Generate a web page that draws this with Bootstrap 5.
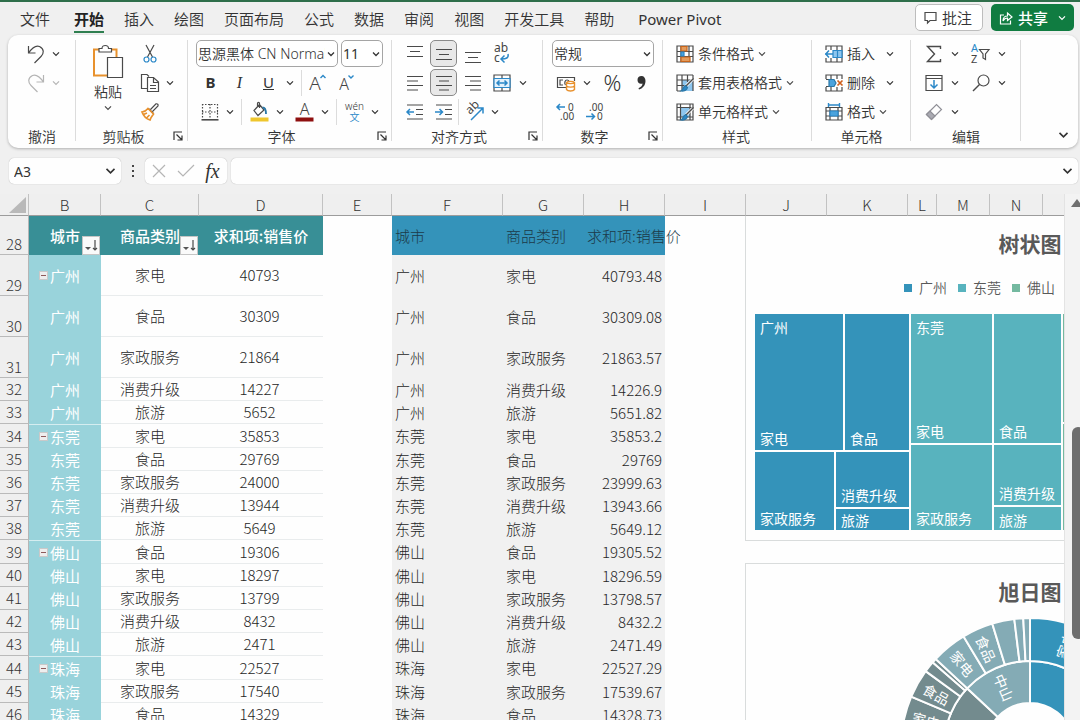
<!DOCTYPE html>
<html lang="zh-CN">
<head>
<meta charset="utf-8">
<meta name="viewport" content="width=device-width, initial-scale=1">
<title>Excel</title>
<link href="https://cdn.jsdelivr.net/npm/bootstrap@5.3.0/dist/css/bootstrap.min.css" rel="stylesheet">
<style>
  body { font-family: "Noto Sans", "Noto Sans CJK SC", sans-serif; font-size: 14px; font-weight: 350; color: #333; background: #f0f0f0; border-top: 2px solid #2f6f4b; }
  button, select, input { color: inherit; font-weight: inherit; }
  svg { display: block; flex: none; fill: none; stroke: #4a4a4a; stroke-width: 1.2; overflow: visible; }
  svg .ch { fill: #444; stroke: none; font-size: 10px; font-weight: 400; }
  svg .ch-a { font-size: 16px; text-anchor: middle; font-weight: 350; }
  svg .ch-l { font-size: 19px; text-anchor: middle; font-weight: 350; }
  .xbtn { display: flex; align-items: center; justify-content: center; padding: 0; border: 0; background: none; height: 27px; flex: none; white-space: nowrap; }
  .ic { width: 29px; }
  .ic-s { width: 27px; }
  .chev { width: 14px; }
  .chev svg { stroke: #333; }
  .txt { font-size: 15px; font-weight: 400; }
  .txt-i { font-family: "Liberation Serif", serif; font-size: 16px; font-style: italic; }
  .pressed { border: 1px solid #8a8a8a; border-radius: 5px; background: #e8e8e8; width: 27px; margin: 0 1px; }

  .menu-tabs { height: 33px; }
  .menu-tabs .nav { gap: 20px; padding-left: 20px; }
  .menu-tabs .nav-link { font-size: 15px; line-height: 24px; padding: 2px 0 2px; color: #333; }
  .menu-tabs .nav-link.active { font-weight: 700; color: #222; border-bottom: 2px solid #2f7f50; padding: 2px 0 0; }
  .top-bar { gap: 8px; padding: 0 6px 2px 0; }
  .top-btn { font-size: 15px; line-height: 24px; height: 27px; border-radius: 5px; padding: 0 8px; gap: 5px; display: flex; align-items: center; }
  .btn-note { background: #fff; border: 1px solid #bdbdbd; color: #333; width: 68px; }
  .btn-share { background: #107c41; border: 0; color: #fff; font-weight: 500; width: 83px; padding: 0 5px 0 8px; }
  .btn-share svg, .btn-share .chev svg { stroke: #fff; }

  .ribbon { background: #fefefe; border-radius: 10px; margin: 0 2px 0 8px; height: 113px; box-shadow: 0 1px 3px #0004; }
  .grp { position: relative; flex: none; padding-top: 4px; }
  .grp::after { content: ""; position: absolute; right: 0; top: 5px; bottom: 7px; width: 1px; background: #dcdcdc; }
  .line { display: flex; align-items: center; height: 29px; padding-left: 8px; }
  .g-undo .line { padding-left: 14px; }
  .cap { display: flex; align-items: center; height: 20px; padding-right: 3px; }
  .g-undo .cap, .g-edit .cap, .g-cell .cap { padding-right: 0; }
  .cap span { flex: 1; text-align: center; }
  .vsep { width: 1px; height: 26px; background: #dcdcdc; flex: none; }
  .g-undo { width: 68px; } .g-clip { width: 112px; } .g-font { width: 204px; } .g-align { width: 151px; }
  .g-num { width: 120px; } .g-style { width: 149px; } .g-cell { width: 99px; } .g-edit { width: 110px; }
  .box-select { appearance: none; border: 1px solid #a5a5a5; border-radius: 5px; height: 27px; padding: 0 12px 0 1px; font-size: 14px; color: #333; white-space: nowrap;
    background: #fff url("data:image/svg+xml,%3Csvg xmlns='http://www.w3.org/2000/svg' width='8' height='6' fill='none' stroke='%23333' stroke-width='1.3'%3E%3Cpath d='M1 1.5 4 4.5 7 1.5'/%3E%3C/svg%3E") no-repeat right 2px center; }
  .sel-font { width: 142px; } .sel-size { width: 42px; font-weight: 400; } .sel-num { width: 102px; margin-left: 1px; }
  .paste { flex-direction: column; justify-content: flex-start; height: 79px; width: 32px; margin-left: 16px; margin-right: 4px; }
  .py { font-size: 10px; line-height: 11px; }
  .menu-row { gap: 4px; padding-left: 13px; }

  .fbar { height: 26px; margin: 10px 2px 0 9px; }
  .fbox { background: #fefefe; border-radius: 5px; box-shadow: 0 0 1px #0005; display: flex; align-items: center; }
  .fbox input { border: 0; background: none; outline: 0; padding: 0 0 0 5px; min-width: 0; flex: 1; font-size: 14px; font-weight: 400; }
  .name-box { width: 112px; } .fx-box { width: 82px; }
  .dots { width: 24px; }
  .fx { font-family: "Liberation Serif", serif; font-style: italic; font-size: 20px; }

  .work { margin-top: 10px; min-height: 0; }
  .sheet { position: relative; overflow: hidden; background: #fefefe; min-width: 0; }
  .grid { table-layout: fixed; border-collapse: separate; border-spacing: 0; width: 1124px; font-family: "Noto Sans CJK SC", sans-serif; font-weight: 300; font-size: 15px; line-height: 20px; color: #262626; }
  .grid th, .grid td { padding: 0; height: 23px; white-space: nowrap; font-weight: 300; }
  .grid thead th { height: 22px; background: #efefef; border-right: 1px solid #c2c2c2; border-bottom: 1px solid #9c9c9c; text-align: center; color: #333; }
  .grid tbody th { background: #efefef; border-right: 1px solid #b5b5b5; border-bottom: 1px solid #bababa; text-align: center; color: #333; }
  .grid .hd > * { height: 39px; }
  .grid .tall > * { height: 41px; }
  .grid .hd > th, .grid .tall > th { vertical-align: bottom; }
  .grid .first > * { height: 24px; }
  .grid td:nth-child(2) { background: #99d3db; color: #fff; text-align: center; font-weight: 400; position: relative; }
  .grid td:nth-child(3), .grid td:nth-child(4) { text-align: center; border-bottom: 1px solid #e9eced; }
  .grid td:nth-child(4) { padding-right: 3px; }
  .grid td:nth-child(6), .grid td:nth-child(7), .grid td:nth-child(8) { background: #f1f1f1; padding-left: 3px; }
  .grid td:nth-child(8) { text-align: right; padding-right: 3px; }
  .grid .first td:nth-child(2) { border-top: 1px solid #d5edf0; }
  .grid .hd td:nth-child(-n+4) { background: #388f96; color: #fff; font-weight: 500; position: relative; border: 0; padding: 0; }
  .grid .hd td:nth-child(n+6):nth-child(-n+8) { background: #3493ba; text-align: left; color: #1c3a48; }
  .filter { position: absolute; right: 1px; bottom: 0; width: 18px; height: 19px; background: #fafafa; border: 1px solid #c5c5c5; padding: 0; }
  .fold { position: absolute; left: 10px; top: calc(50% - 5px); width: 9px; height: 9px; padding: 0; border: 1px solid #c9c9c9; background: #eee; display: flex; align-items: center; }
  .fold::after { content: ""; width: 5px; height: 1px; margin: auto; background: #8d5a5a; }
  .corner svg { margin-left: 9px; stroke: none; fill: #b9b9b9; }

  .charts { position: absolute; left: 745px; top: 22px; width: 570px; }
  .chart { background: #fefefe; border: 1px solid #d9dcdc; color: #595959; padding-top: 12px; }
  .chart h2 { font-family: "Noto Sans CJK SC", sans-serif; font-size: 21px; line-height: 30px; font-weight: 700; margin: 0; text-align: center; color: #595959; }
  .chart-tree { height: 325px; border-top: 0; }
  .chart-sun { height: 340px; margin-top: 22px; }
  .legend-row { gap: 11px; padding-left: 158px; line-height: 20px; margin-top: 20px; }
  .legend-row i { width: 8px; height: 8px; margin-right: 7px; }
  .c1 { background: #3493ba; } .c2 { background: #58b3be; } .c3 { background: #74b9a0; }
  .tree { margin: 16px 9px 0; height: 216px; gap: 2px; color: #fff; font-family: "Noto Sans CJK SC", sans-serif; line-height: 20px; font-weight: 400; }
  .tree .d-flex { gap: 2px; }
  .cell { display: flex; flex-direction: column; justify-content: space-between; padding: 3px 5px 2px; }
  .cell span:only-child { margin-top: auto; }
  .cell.low { padding: 0 5px; }
  .w-a { width: 154px; } .w-b { width: 150px; }
  .chart-sun text { fill: #fff; stroke: none; font: 14px "Noto Sans CJK SC", sans-serif; text-anchor: middle; dominant-baseline: central; }
  .sun { stroke: #fefefe; stroke-width: 2; }
  #sunburst { margin-top: 11px; }

  .vscroll { width: 16px; background: #f3f3f3; border-left: 1px solid #e3e3e3; overflow: hidden; }
  .vscroll svg { margin: 5px 0 0 6px; stroke: none; fill: #707070; }
  .thumb { width: 12px; height: 212px; margin: 220px 0 0 7px; border-radius: 6px; background: #6e6e6e; }
</style>
</head>
<body class="vh-100 d-flex flex-column overflow-hidden">
<svg class="d-none">
  <symbol id="cv" viewBox="0 0 8 6"><path d="M1 1.4 4 4.4 7 1.4"/></symbol>
  <symbol id="launch" viewBox="0 0 10 10"><path d="M1 9V1H9M3.5 3.5 8.5 8.5M9 4.5V9H4.5"/></symbol>
</svg>

<header class="menu-tabs d-flex flex-shrink-0 align-items-center justify-content-between">
  <ul class="nav flex-nowrap text-nowrap">
    <li class="me-1"><a class="nav-link" href="#">文件</a></li>
    <li><a class="nav-link active" href="#">开始</a></li>
    <li><a class="nav-link" href="#">插入</a></li>
    <li><a class="nav-link" href="#">绘图</a></li>
    <li><a class="nav-link" href="#">页面布局</a></li>
    <li><a class="nav-link" href="#">公式</a></li>
    <li><a class="nav-link" href="#">数据</a></li>
    <li><a class="nav-link" href="#">审阅</a></li>
    <li><a class="nav-link" href="#">视图</a></li>
    <li><a class="nav-link" href="#">开发工具</a></li>
    <li class="me-1"><a class="nav-link" href="#">帮助</a></li>
    <li><a class="nav-link fw-normal" href="#">Power Pivot</a></li>
  </ul>
  <div class="top-bar d-flex text-nowrap">
    <button class="top-btn btn-note"><svg width="13" height="13"><path d="M1 1.5H12V9.5H6L3.5 12V9.5H1Z"/></svg>批注</button>
    <button class="top-btn btn-share"><svg width="14" height="14"><path d="M5 4H1.5V13H11.5V9.5M4 10C4 6.500 6 5 8.500 5V2L13 6 8.500 9.500V7C6.500 7 5 8 4 10Z"/></svg>共享<span class="chev ms-auto"><svg class="m-auto" width="8" height="6"><use href="#cv"/></svg></span></button>
  </div>
</header>

<section class="ribbon d-flex flex-shrink-0" aria-label="开始">
  <div class="grp g-undo">
    <div class="line">
      <button class="xbtn ic-s" aria-label="撤消"><svg width="18" height="20"><path d="M1.500 2V9H8.500M1.500 9C5 4 9 1 12.500 2.500 17.500 5 17 9.500 14 12.500L7.500 19"/></svg></button>
      <button class="xbtn chev" aria-label="撤消选项"><svg width="8" height="6"><use href="#cv"/></svg></button>
    </div>
    <div class="line">
      <button class="xbtn ic-s" aria-label="恢复"><svg width="18" height="20" style="stroke:#b5b5b5"><path d="M16.500 2V9H9.500M16.500 9C13 4 9 1 5.500 2.500 .5 5 1 9.500 4 12.500L10.500 19"/></svg></button>
      <button class="xbtn chev" aria-label="恢复选项"><svg width="8" height="6" style="stroke:#b5b5b5"><use href="#cv"/></svg></button>
    </div>
    <div class="line"></div>
    <div class="cap"><span>撤消</span></div>
  </div>

  <div class="grp g-clip">
    <div class="d-flex">
      <div style="height:87px">
        <button class="xbtn paste mt-1"><svg width="32" height="36"><path stroke="#e8912d" stroke-width="2" d="M7 6.500H2V32.500H15M19 6.500H24.500V14"/><path fill="#fff" d="M7 9V5.500H10C10 1.500 16.500 1.500 16.500 5.500H19.500V9ZM15.500 14.500H30.500V34.500H15.500Z"/></svg><span class="lh-sm mt-1">粘贴</span><svg class="mt-1" width="8" height="6"><use href="#cv"/></svg></button>
      </div>
      <div>
        <div class="line"><button class="xbtn ic-s" aria-label="剪切"><svg width="14" height="20"><path d="M3 1 9.500 13M11 1 4.500 13"/><circle cx="3.500" cy="15.500" r="2.500" stroke="#2b88c8"/><circle cx="10.500" cy="15.500" r="2.500" stroke="#2b88c8"/></svg></button></div>
        <div class="line"><button class="xbtn ic-s" aria-label="复制"><svg width="20" height="20"><path d="M7 15.500H1.500V1.500H7L9 3.500M7.500 4.500H13.500L18.500 9V18.500H7.500ZM13.500 4.500V9.500H18.500M10 12.500H16M10 15.500H16"/></svg></button><button class="xbtn chev" aria-label="复制选项"><svg width="8" height="6"><use href="#cv"/></svg></button></div>
        <div class="line"><button class="xbtn ic-s" aria-label="格式刷"><svg width="18" height="18"><path d="M7.500 5.500 12.500 10.500M9.500 6.500 15 .8C16.500 .5 17.500 1.500 17 3L11.500 8.500"/><path stroke="#e8912d" stroke-width="1.700" d="M7 5.500C5 8 3 8.800 1 9 2.500 13 5.500 16 9 17 9.500 15 11 13 12.500 11ZM2.500 11.500 6 10M5.500 15 8.500 12"/></svg></button></div>
      </div>
    </div>
    <div class="cap"><span>剪贴板</span><button class="xbtn chev" aria-label="剪贴板设置"><svg width="10" height="10"><use href="#launch"/></svg></button></div>
  </div>

  <div class="grp g-font">
    <div class="line" style="gap:3px">
      <select class="box-select sel-font" aria-label="字体"><option>思源黑体 CN Normal</option></select>
      <select class="box-select sel-size" aria-label="字号"><option>11</option></select>
    </div>
    <div class="line">
      <button class="xbtn ic txt fw-bold">B</button><button class="xbtn ic txt-i">I</button><button class="xbtn ic txt text-decoration-underline">U</button>
      <button class="xbtn chev" aria-label="下划线选项"><svg width="8" height="6"><use href="#cv"/></svg></button>
      <span class="vsep ms-1"></span>
      <button class="xbtn ic" aria-label="增大字号"><svg width="18" height="20"><text class="ch ch-l" x="7" y="17">A</text><path stroke="#2b88c8" stroke-width="1.400" d="M12.500 5 15 2.500 17.500 5"/></svg></button>
      <button class="xbtn ic" aria-label="减小字号"><svg width="18" height="20"><text class="ch ch-a" x="7" y="17">A</text><path stroke="#2b88c8" stroke-width="1.400" d="M11.500 2.500 14 5 16.500 2.500"/></svg></button>
    </div>
    <div class="line">
      <button class="xbtn ic-s" aria-label="边框"><svg width="18" height="18"><path stroke-dasharray="1.500 1.500" d="M1.500 1V16M9 1V16M16.500 1V16M1 1.500H17M1 9H17"/><path stroke-width="1.600" d="M.5 16.800H17.500"/></svg></button>
      <button class="xbtn chev" aria-label="边框选项"><svg width="8" height="6"><use href="#cv"/></svg></button>
      <span class="vsep mx-1"></span>
      <button class="xbtn ic-s" aria-label="填充颜色"><svg width="19" height="20"><path d="M4 8.500 9.500 2.500 14 8 8 13.500ZM9.500 6V1.500C9.500 0 7.500 0 7.500 1.500V4"/><path stroke="#2b78a8" stroke-width="1.800" d="M12.500 5.500C15.500 5.500 16 8.500 16 12"/><path stroke="#efc62d" stroke-width="4" d="M.5 17.500H18.500"/></svg></button>
      <button class="xbtn chev" aria-label="填充选项"><svg width="8" height="6"><use href="#cv"/></svg></button>
      <button class="xbtn ic-s ms-1" aria-label="字体颜色"><svg width="19" height="20"><text class="ch ch-a" x="9.500" y="13">A</text><path stroke="#8e0f0f" stroke-width="4" d="M.5 17.500H18.500"/></svg></button>
      <button class="xbtn chev" aria-label="字体颜色选项"><svg width="8" height="6"><use href="#cv"/></svg></button>
      <span class="vsep mx-1"></span>
      <button class="xbtn ic-s flex-column py"><span>wén</span><span style="color:#2b88c8">文</span></button>
      <button class="xbtn chev" aria-label="拼音选项"><svg width="8" height="6"><use href="#cv"/></svg></button>
    </div>
    <div class="cap"><span>字体</span><button class="xbtn chev" aria-label="字体设置"><svg width="10" height="10"><use href="#launch"/></svg></button></div>
  </div>

  <div class="grp g-align">
    <div class="line">
      <button class="xbtn ic" aria-label="顶端对齐"><svg width="18" height="18"><path d="M1 1.500H17M4 6.500H14M1 11.500H17"/></svg></button>
      <button class="xbtn pressed" aria-label="垂直居中"><svg width="18" height="18"><path d="M1 4.500H17M4 9.500H14M1 14.500H17"/></svg></button>
      <button class="xbtn ic" aria-label="底端对齐"><svg width="18" height="18"><path d="M1 7.500H17M4 12.500H14M1 17.500H17"/></svg></button>
      <button class="xbtn ic" aria-label="自动换行"><svg width="17" height="20"><text class="ch" x="1" y="8" style="font-size:12px">ab</text><text class="ch" x="1" y="18" style="font-size:12px">c</text><path stroke="#2b88c8" stroke-width="1.500" d="M15 10C16 14 13 15 8.500 15M11.500 11.500 8 15 11.500 18.500"/></svg></button>
    </div>
    <div class="line">
      <button class="xbtn ic" aria-label="左对齐"><svg width="18" height="18"><path d="M1 2.500H17M1 7H12M1 11.500H17M1 16H12"/></svg></button>
      <button class="xbtn pressed" aria-label="居中"><svg width="18" height="18"><path d="M1 2.500H17M4 7H14M1 11.500H17M4 16H14"/></svg></button>
      <button class="xbtn ic" aria-label="右对齐"><svg width="18" height="18"><path d="M1 2.500H17M6 7H17M1 11.500H17M6 16H17"/></svg></button>
      <button class="xbtn ic" aria-label="合并后居中"><svg width="18" height="18"><path d="M1 1H17V17H1ZM9 1V5M9 13V17"/><path fill="#e4f1fb" stroke="#2b88c8" d="M1 4.500H17V13.500H1Z"/><path stroke="#2b88c8" stroke-width="1.500" d="M4 9H14M6.500 6.500 4 9 6.500 11.500M11.500 6.500 14 9 11.500 11.500"/></svg></button>
      <button class="xbtn chev" aria-label="合并选项"><svg width="8" height="6"><use href="#cv"/></svg></button>
    </div>
    <div class="line">
      <button class="xbtn ic" aria-label="减少缩进"><svg width="18" height="18"><path d="M1 2H17M10 6.500H17M10 11.500H17M1 16H17"/><path stroke="#2b88c8" stroke-width="1.500" d="M1 9H8M4 6 1 9 4 12"/></svg></button>
      <button class="xbtn ic" aria-label="增加缩进"><svg width="18" height="18"><path d="M1 2H17M10 6.500H17M10 11.500H17M1 16H17"/><path stroke="#2b88c8" stroke-width="1.500" d="M0 9H7M4.500 6 7.500 9 4.500 12"/></svg></button>
      <span class="vsep"></span>
      <button class="xbtn ic" aria-label="方向"><svg width="20" height="20"><text class="ch" transform="translate(6 13) rotate(-45)" style="font-size:12px">ab</text><path stroke="#2b88c8" stroke-width="1.500" d="M7 18 18.500 6.500M13.500 6H19V11.500"/></svg></button>
      <button class="xbtn chev" aria-label="方向选项"><svg width="8" height="6"><use href="#cv"/></svg></button>
    </div>
    <div class="cap"><span>对齐方式</span><button class="xbtn chev" aria-label="对齐设置"><svg width="10" height="10"><use href="#launch"/></svg></button></div>
  </div>

  <div class="grp g-num">
    <div class="line"><select class="box-select sel-num" aria-label="数字格式"><option>常规</option></select></div>
    <div class="line">
      <button class="xbtn ic" aria-label="会计数字格式"><svg width="20" height="18"><path d="M10 13.500H1.500V3.500H18.500V7M7 6H4V11H7M9.500 11C8 9 9 6 11 6S13 7 13 8"/><path fill="#fff" stroke="#e8912d" stroke-width="1.400" d="M10.500 8.500C12 7 17 7 18.500 8.500V15.500C17 17.500 12 17.500 10.500 15.500ZM10.500 8.500C12 10 17 10 18.500 8.500M10.500 12C12 13.500 17 13.500 18.500 12"/></svg></button>
      <button class="xbtn chev" aria-label="会计格式选项"><svg width="8" height="6"><use href="#cv"/></svg></button>
      <button class="xbtn ic ms-1" style="font-size:22px">%</button>
      <button class="xbtn ic" aria-label="千位分隔样式"><svg width="10" height="16"><path fill="#333" stroke="none" d="M4.500 1C7 1 8.500 3 8.500 6 8.500 10.500 5.500 13.500 2 14.500L1.500 13.300C4 12 5.500 10.500 5.500 8.500 2.500 9.500 .5 7.500 .5 5 .5 2.500 2 1 4.500 1Z"/></svg></button>
    </div>
    <div class="line">
      <button class="xbtn ic" aria-label="增加小数位数"><svg width="19" height="20"><text class="ch" x="12" y="9">0</text><text class="ch" x="4" y="18">.00</text><path stroke="#2b88c8" stroke-width="1.500" d="M1 5H9M4 2 1 5 4 8"/></svg></button>
      <button class="xbtn ic" aria-label="减少小数位数"><svg width="19" height="20"><text class="ch" x="4" y="9">.00</text><text class="ch" x="12" y="18">0</text><path stroke="#2b88c8" stroke-width="1.500" d="M1 14.500H9.500M6.500 11.500 9.500 14.500 6.500 17.500"/></svg></button>
    </div>
    <div class="cap"><span>数字</span><button class="xbtn chev" aria-label="数字设置"><svg width="10" height="10"><use href="#launch"/></svg></button></div>
  </div>

  <div class="grp g-style">
    <div class="line menu-row"><button class="xbtn gap-1"><svg width="18" height="18"><path d="M1 1H17V17H1ZM1 6.500H17M1 11.500H17M5 1V17M13 1V17"/><path fill="#e39a5a" stroke="#c8651b" d="M5 1.500H11V6H5ZM5 12H14V16.500H5Z"/><path fill="#4ba3dd" stroke="#2b88c8" d="M5 7H8V11H5Z"/></svg>条件格式<svg width="8" height="6"><use href="#cv"/></svg></button></div>
    <div class="line menu-row"><button class="xbtn gap-1"><svg width="18" height="18"><path fill="#8ec6ee" stroke="none" d="M6 6H17V17H6Z"/><path d="M1 17V1H17M1 6H17M1 11.500H10M6 1V17M11.500 1V8M1 17H5M17 1V17"/><path stroke="#fff" stroke-width="3" d="M17 5 9 13"/><path stroke-width="1.500" d="M17.500 4.500 10 12"/><path fill="#2b88c8" stroke="#2b78a8" d="M9.500 11.500 11.500 13.500C11 16 8 17.500 5 17 7 16 7 13 9.500 11.500Z"/></svg>套用表格格式<svg width="8" height="6"><use href="#cv"/></svg></button></div>
    <div class="line menu-row"><button class="xbtn gap-1"><svg width="18" height="18"><path fill="#8ec6ee" stroke="none" d="M4 4H14V14H4Z"/><path d="M1 1H17V17H1ZM1 4.500H17M4.500 1V17M1 14H17M14 1V17"/><path stroke="#fff" stroke-width="3" d="M17 5 9 13"/><path stroke-width="1.500" d="M17.500 4.500 10 12"/><path fill="#2b88c8" stroke="#2b78a8" d="M9.500 11.500 11.500 13.500C11 16 8 17.500 5 17 7 16 7 13 9.500 11.500Z"/></svg>单元格样式<svg width="8" height="6"><use href="#cv"/></svg></button></div>
    <div class="cap"><span>样式</span></div>
  </div>

  <div class="grp g-cell">
    <div class="line menu-row"><button class="xbtn gap-1"><svg width="18" height="18"><path d="M1 5V1H17V17H1V13M6 1V5M12 1V5M6 13V17M12 13V17"/><path fill="#8ec6ee" stroke="#2b88c8" d="M8 5.500H17V12.500H8ZM12.500 5.500V12.500"/><path stroke="#2b88c8" stroke-width="1.500" d="M0 9H8M4 5.500 .8 9 4 12.500"/></svg>插入</button><button class="xbtn chev ms-1" aria-label="插入选项"><svg width="8" height="6"><use href="#cv"/></svg></button></div>
    <div class="line menu-row"><button class="xbtn gap-1"><svg width="18" height="18"><path d="M1 5V1H17V5M1 13V17H17V13M6 1V5M12 1V5M6 13V17M12 13V17M1 5.500H4M1 12.500H4"/><path fill="#4ba3dd" stroke="#2b78a8" d="M4 5.500H9L11 9 9 12.500H4Z"/><path stroke="#d0601c" stroke-width="1.700" d="M12.500 6.500 17.500 11.500M17.500 6.500 12.500 11.500"/></svg>删除</button><button class="xbtn chev ms-1" aria-label="删除选项"><svg width="8" height="6"><use href="#cv"/></svg></button></div>
    <div class="line menu-row"><button class="xbtn gap-1"><svg width="18" height="18"><path d="M1 4.500H17V17H1ZM1 8H17M1 13H17M5 4.500V17M13 4.500V17"/><path fill="#4ba3dd" stroke="#2b88c8" d="M5 8H13V13H5Z"/><path stroke="#2b88c8" stroke-width="1.400" d="M3.500 0V4M14.500 0V4M3.500 2H14.500"/></svg>格式<svg width="8" height="6"><use href="#cv"/></svg></button></div>
    <div class="cap"><span>单元格</span></div>
  </div>

  <div class="grp g-edit">
    <div class="line">
      <button class="xbtn ic" aria-label="自动求和"><svg width="16" height="18"><path stroke-width="1.400" d="M14.500 4V1.500H1.500L8.500 9 1.500 16.500H14.500V14"/></svg></button>
      <button class="xbtn chev" aria-label="求和选项"><svg width="8" height="6"><use href="#cv"/></svg></button>
      <button class="xbtn ic ms-1" aria-label="排序和筛选"><svg width="19" height="20"><text class="ch" x="0" y="8" style="fill:#2b88c8;font-size:11px">A</text><text class="ch" x="0" y="19" style="font-size:11px">Z</text><path d="M8.500 5.500H18L14.500 10V15.500L12 14V10Z"/></svg></button>
      <button class="xbtn chev" aria-label="排序选项"><svg width="8" height="6"><use href="#cv"/></svg></button>
    </div>
    <div class="line">
      <button class="xbtn ic" aria-label="填充"><svg width="18" height="18"><path d="M1 1.500H17V16.500H1ZM1 4.500H17"/><path stroke="#2b88c8" stroke-width="1.500" d="M9 6V14M5.500 10.500 9 14 12.500 10.500"/></svg></button>
      <button class="xbtn chev" aria-label="填充选项"><svg width="8" height="6"><use href="#cv"/></svg></button>
      <button class="xbtn ic ms-1" aria-label="查找和选择"><svg width="18" height="18"><circle cx="11.500" cy="6.500" r="5.500"/><path stroke-width="1.400" d="M7.500 10.500 1 17"/></svg></button>
      <button class="xbtn chev" aria-label="查找选项"><svg width="8" height="6"><use href="#cv"/></svg></button>
    </div>
    <div class="line">
      <button class="xbtn ic" aria-label="清除"><svg width="18" height="18" style="stroke:#8f8f96"><path d="M1.500 11.500 11.500 1.500 16.500 6.500 6.500 16.500Z"/><path fill="#aaaab2" d="M1.500 11.500 5 8 10 13 6.500 16.500Z"/></svg></button>
      <button class="xbtn chev" aria-label="清除选项"><svg width="8" height="6"><use href="#cv"/></svg></button>
    </div>
    <div class="cap"><span>编辑</span></div>
  </div>
  <button class="xbtn chev ms-auto mt-auto me-2" aria-label="功能区显示选项"><svg width="11" height="8" viewBox="0 0 8 6"><use href="#cv"/></svg></button>
</section>

<section class="fbar d-flex flex-shrink-0">
  <div class="fbox name-box"><input aria-label="名称框" value="A3"><button class="xbtn chev me-1" aria-label="名称列表"><svg width="11" height="8" viewBox="0 0 8 6"><use href="#cv"/></svg></button></div>
  <div class="dots d-flex align-items-center justify-content-center"><svg width="8" height="14" style="fill:#444;stroke:none"><path d="M3 1h2v2H3zM3 6h2v2H3zM3 11h2v2H3z"/></svg></div>
  <div class="fbox fx-box">
    <button class="xbtn ic-s" aria-label="取消"><svg width="14" height="14" style="stroke:#b5b5b5"><path d="M1 1 13 13M13 1 1 13"/></svg></button>
    <button class="xbtn ic-s" aria-label="输入"><svg width="18" height="14" style="stroke:#b5b5b5"><path d="M1 7 6 12 17 1"/></svg></button>
    <button class="xbtn ic-s fx" aria-label="插入函数">fx</button>
  </div>
  <div class="fbox flex-fill ms-1"><input aria-label="编辑栏"><button class="xbtn chev me-1" aria-label="展开编辑栏"><svg width="11" height="8" viewBox="0 0 8 6"><use href="#cv"/></svg></button></div>
</section>

<main class="work d-flex flex-fill">
  <div class="sheet flex-fill">
    <table class="grid">
      <colgroup><col style="width:29px"><col style="width:72px"><col style="width:98px"><col style="width:124px"><col style="width:69px"><col style="width:111px"><col style="width:81px"><col style="width:81px"><col style="width:81px"><col style="width:81px"><col style="width:81px"><col style="width:29px"><col style="width:53px"><col style="width:53px"><col style="width:81px"></colgroup>
      <thead><tr><th class="corner"><svg width="18" height="16"><path d="M17 0V16H0Z"/></svg></th><th>B</th><th>C</th><th>D</th><th>E</th><th>F</th><th>G</th><th>H</th><th>I</th><th>J</th><th>K</th><th>L</th><th>M</th><th>N</th><th></th></tr></thead>
      <tbody>
        <tr class="hd"><th>28</th><td>城市<button class="filter" aria-label="筛选城市"><svg width="16" height="17"><path fill="#555" stroke="none" d="M2 10H8L5 13Z"/><path d="M12 3V13M10 11 12 13 14 11"/></svg></button></td><td>商品类别<button class="filter" aria-label="筛选商品类别"><svg width="16" height="17"><path fill="#555" stroke="none" d="M2 10H8L5 13Z"/><path d="M12 3V13M10 11 12 13 14 11"/></svg></button></td><td>求和项:销售价</td><td></td><td>城市</td><td>商品类别</td><td>求和项:销售价</td></tr>
        <tr class="tall"><th>29</th><td><button class="fold" aria-label="折叠广州"></button>广州</td><td>家电</td><td>40793</td><td></td><td>广州</td><td>家电</td><td>40793.48</td></tr>
        <tr class="tall"><th>30</th><td>广州</td><td>食品</td><td>30309</td><td></td><td>广州</td><td>食品</td><td>30309.08</td></tr>
        <tr class="tall"><th>31</th><td>广州</td><td>家政服务</td><td>21864</td><td></td><td>广州</td><td>家政服务</td><td>21863.57</td></tr>
        <tr><th>32</th><td>广州</td><td>消费升级</td><td>14227</td><td></td><td>广州</td><td>消费升级</td><td>14226.9</td></tr>
        <tr><th>33</th><td>广州</td><td>旅游</td><td>5652</td><td></td><td>广州</td><td>旅游</td><td>5651.82</td></tr>
        <tr class="first"><th>34</th><td><button class="fold" aria-label="折叠东莞"></button>东莞</td><td>家电</td><td>35853</td><td></td><td>东莞</td><td>家电</td><td>35853.2</td></tr>
        <tr><th>35</th><td>东莞</td><td>食品</td><td>29769</td><td></td><td>东莞</td><td>食品</td><td>29769</td></tr>
        <tr><th>36</th><td>东莞</td><td>家政服务</td><td>24000</td><td></td><td>东莞</td><td>家政服务</td><td>23999.63</td></tr>
        <tr><th>37</th><td>东莞</td><td>消费升级</td><td>13944</td><td></td><td>东莞</td><td>消费升级</td><td>13943.66</td></tr>
        <tr><th>38</th><td>东莞</td><td>旅游</td><td>5649</td><td></td><td>东莞</td><td>旅游</td><td>5649.12</td></tr>
        <tr class="first"><th>39</th><td><button class="fold" aria-label="折叠佛山"></button>佛山</td><td>食品</td><td>19306</td><td></td><td>佛山</td><td>食品</td><td>19305.52</td></tr>
        <tr><th>40</th><td>佛山</td><td>家电</td><td>18297</td><td></td><td>佛山</td><td>家电</td><td>18296.59</td></tr>
        <tr><th>41</th><td>佛山</td><td>家政服务</td><td>13799</td><td></td><td>佛山</td><td>家政服务</td><td>13798.57</td></tr>
        <tr><th>42</th><td>佛山</td><td>消费升级</td><td>8432</td><td></td><td>佛山</td><td>消费升级</td><td>8432.2</td></tr>
        <tr><th>43</th><td>佛山</td><td>旅游</td><td>2471</td><td></td><td>佛山</td><td>旅游</td><td>2471.49</td></tr>
        <tr class="first"><th>44</th><td><button class="fold" aria-label="折叠珠海"></button>珠海</td><td>家电</td><td>22527</td><td></td><td>珠海</td><td>家电</td><td>22527.29</td></tr>
        <tr><th>45</th><td>珠海</td><td>家政服务</td><td>17540</td><td></td><td>珠海</td><td>家政服务</td><td>17539.67</td></tr>
        <tr><th>46</th><td>珠海</td><td>食品</td><td>14329</td><td></td><td>珠海</td><td>食品</td><td>14328.73</td></tr>
      </tbody>
    </table>

    <div class="charts">
      <section class="chart chart-tree">
        <h2>树状图</h2>
        <div class="legend-row d-flex">
          <span class="d-flex align-items-center"><i class="c1"></i>广州</span><span class="d-flex align-items-center"><i class="c2"></i>东莞</span><span class="d-flex align-items-center"><i class="c3"></i>佛山</span>
        </div>
        <div class="tree d-flex">
          <div class="w-a d-flex flex-column flex-shrink-0">
            <div class="d-flex" style="height:136px"><div class="cell c1" style="width:88px"><span>广州</span><span>家电</span></div><div class="cell c1 flex-fill"><span>食品</span></div></div>
            <div class="d-flex flex-fill"><div class="cell c1" style="width:79px"><span>家政服务</span></div><div class="d-flex flex-column flex-fill"><div class="cell c1 flex-fill"><span>消费升级</span></div><div class="cell low c1" style="height:21px"><span>旅游</span></div></div></div>
          </div>
          <div class="w-b d-flex flex-column flex-shrink-0">
            <div class="d-flex" style="height:129px"><div class="cell c2" style="width:81px"><span>东莞</span><span>家电</span></div><div class="cell c2 flex-fill"><span>食品</span></div></div>
            <div class="d-flex flex-fill"><div class="cell c2" style="width:81px"><span>家政服务</span></div><div class="d-flex flex-column flex-fill"><div class="cell c2 flex-fill"><span>消费升级</span></div><div class="cell low c2" style="height:23px"><span>旅游</span></div></div></div>
          </div>
          <div class="d-flex flex-column flex-fill"><div class="c3" style="height:108px"></div><div class="c3 flex-fill"></div></div>
        </div>
      </section>
      <section class="chart chart-sun">
        <h2>旭日图</h2>
        <svg id="sunburst" class="mx-auto" width="260" height="260" viewBox="-130 -130 260 260"></svg>
      </section>
    </div>
  </div>
  <div class="vscroll flex-shrink-0"><svg width="12" height="8"><path d="M6 0 12 8H0Z"/></svg><div class="thumb"></div></div>
</main>

<script src="https://cdn.jsdelivr.net/npm/bootstrap@5.3.0/dist/js/bootstrap.bundle.min.js"></script>
<script>
  // ring slices: start and end angle in degrees clockwise from the top, fill, label
  const inner = [[0, 76, '#3493ba', ''], [76, 180, '#58b3be', ''], [180, 313, '#738b8e', ''], [313, 360, '#84abb5', '中山']];
  const outer = [[0, 38, '#3493ba', '家电'], [38, 76, '#3493ba', '食品'], [76, 180, '#58b3be', ''], [180, 276, '#738b8e', ''],
    [276, 293, '#738b8e', '家电'], [293, 306, '#738b8e', '食品'], [306, 311, '#738b8e', ''], [311, 313, '#738b8e', ''],
    [313, 329, '#84abb5', '家电'], [329, 343, '#84abb5', '食品'], [343, 353, '#84abb5', ''], [353, 357, '#84abb5', ''], [357, 360, '#84abb5', '']];
  const at = (r, a) => [r * Math.sin(a * Math.PI / 180), -r * Math.cos(a * Math.PI / 180)].map(v => v.toFixed(2)).join(' ');
  const ring = (r0, r1, list) => list.map(([a, b, fill, name]) => {
    const m = (a + b) / 2;
    return `<path class="sun" fill="${fill}" d="M${at(r0, a)}L${at(r1, a)}A${r1} ${r1} 0 0 1 ${at(r1, b)}L${at(r0, b)}A${r0} ${r0} 0 0 0 ${at(r0, a)}Z"/>` +
      (name ? `<text transform="translate(${at((r0 + r1) / 2, m)}) rotate(${m > 180 ? m - 270 : m - 90})">${name}</text>` : '');
  }).join('');
  document.getElementById('sunburst').innerHTML = ring(44, 86, inner) + ring(86, 129, outer);
</script>
</body>
</html>
